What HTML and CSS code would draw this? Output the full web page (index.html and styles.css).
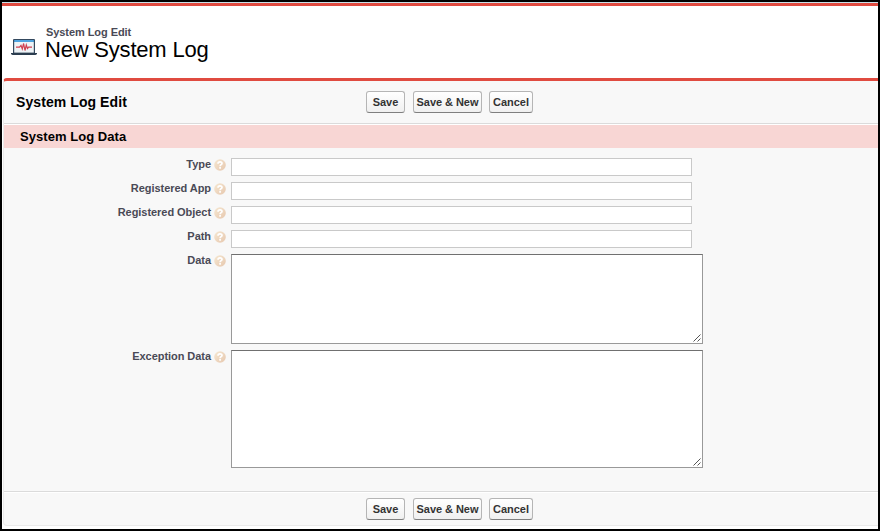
FILE: index.html
```html
<!DOCTYPE html>
<html lang="en">
<head>
<meta charset="utf-8">
<title>New System Log</title>
<link rel="stylesheet" href="styles.css">
</head>
<body>
<svg width="0" height="0" class="defs" aria-hidden="true">
  <defs>
    <linearGradient id="orb" x1="0" y1="0" x2="1" y2="1">
      <stop offset="0" stop-color="#f6e8d2"/>
      <stop offset="1" stop-color="#e6c7ae"/>
    </linearGradient>
    <symbol id="help" viewBox="0 0 12 12">
      <circle cx="6" cy="6" r="5.8" fill="url(#orb)"/>
      <path d="M4 4.7C4 2.2 8 2.3 8 4.4C8 5.7 6.1 5.7 6.1 7.2M6.1 8.1V9.7" fill="none" stroke="#fff" stroke-width="1.7"/>
    </symbol>
  </defs>
</svg>
<div class="window">
  <header class="page-header">
    <svg class="logo" viewBox="0 0 26 18" aria-hidden="true">
      <rect x="2" y="1" width="22" height="15" rx="1" fill="#34495e"/>
      <rect x="3.2" y="2" width="19.6" height="2" fill="#4da3e0"/>
      <rect x="3.2" y="4" width="19.6" height="10.6" fill="#eef3f6"/>
      <path d="M5 9.2H8.5L10 7.5L11.3 11L12.6 5.5L14 12.5L15.3 7L16.5 10.5L17.6 9.2H21" fill="none" stroke="#cf4050" stroke-width="1.2"/>
      <path d="M0 15H26V15.8Q25.5 17 24 17H2Q.5 17 0 15.8Z" fill="#2b3d4f"/>
    </svg>
    <div>
      <div class="kicker">System Log Edit</div>
      <h1>New System Log</h1>
    </div>
  </header>
  <main class="panel">
    <div class="bar top">
      <h2>System Log Edit</h2>
      <div class="buttons"><button class="save">Save</button><button class="save-new">Save &amp; New</button><button class="cancel">Cancel</button></div>
    </div>
    <h3>System Log Data</h3>
    <form class="fields">
      <label for="type">Type</label><svg class="help"><use href="#help"/></svg><input id="type">
      <label for="app">Registered App</label><svg class="help"><use href="#help"/></svg><input id="app">
      <label for="object">Registered Object</label><svg class="help"><use href="#help"/></svg><input id="object">
      <label for="path">Path</label><svg class="help"><use href="#help"/></svg><input id="path">
      <label for="data">Data</label><svg class="help"><use href="#help"/></svg>
      <div class="area data"><textarea id="data"></textarea><svg class="grip" viewBox="0 0 8 8"><path d="M.5 7.5L7.5 .5M4.5 7.5L7.5 4.5"/></svg></div>
      <label for="exception">Exception Data</label><svg class="help"><use href="#help"/></svg>
      <div class="area exception"><textarea id="exception"></textarea><svg class="grip" viewBox="0 0 8 8"><path d="M.5 7.5L7.5 .5M4.5 7.5L7.5 4.5"/></svg></div>
    </form>
    <div class="bar bottom">
      <div class="buttons"><button class="save">Save</button><button class="save-new">Save &amp; New</button><button class="cancel">Cancel</button></div>
    </div>
  </main>
</div>
</body>
</html>
```
FILE: styles.css
```css
* { box-sizing: border-box; }
body { margin: 0; font-family: "Liberation Sans", Arial, sans-serif; }
h1, h2, h3 { margin: 0; }
.defs { position: absolute; }
.window { height: 531px; border: 2px solid #000; background: #fff; padding: 1px 0 0 1px; overflow: hidden; }
.page-header { height: 75px; margin-left: -1px; border-top: 3px solid #e04b40; padding: 20px 0 0 9px; display: flex; box-shadow: 0 -1px #c9e2ea; }
.logo { width: 26px; height: 18px; margin: 12px 8px 0 0; flex: none; }
.kicker { font-size: 11px; font-weight: bold; line-height: 13px; letter-spacing: -.07px; color: #4a4a56; margin-left: 1px; white-space: nowrap; }
h1 { font-size: 22px; font-weight: normal; line-height: 21px; letter-spacing: -.2px; color: #000; white-space: nowrap; }
.panel { height: 448px; border: 1px solid #eaeaea; border-right: 0; border-top: 3px solid #e04b40; border-radius: 4px 0 0 4px; background: #f8f8f8; }
.bar { display: flex; align-items: center; }
.top { height: 43px; border-bottom: 1px solid #dbdbdb; }
.bottom { height: 34px; border-top: 1px solid #dbdbdb; box-shadow: inset 0 1px #fff; padding-left: 362px; }
h2 { width: 350px; margin-left: 12px; font-size: 14px; line-height: 18px; letter-spacing: .08px; }
.buttons { display: flex; }
button { height: 22px; padding: 0; border: 1px solid #b5b5b5; border-bottom-color: #7f7f7f; border-radius: 3px; background: linear-gradient(#fff, #f0f0f0); color: #333; font: bold 11px "Liberation Sans", Arial, sans-serif; letter-spacing: -.05px; white-space: nowrap; }
.save { width: 39px; margin-right: 8px; }
.save-new { width: 69px; margin-right: 7px; }
.cancel { width: 44px; }
h3 { height: 24px; border-top: 1px solid #fff; background: #f8d6d4; padding-left: 16px; font-size: 13px; line-height: 23px; letter-spacing: .05px; }
.fields { height: 343px; margin: 0; padding-top: 10px; display: grid; grid-template-columns: 207px 12px 472px; grid-template-rows: repeat(4, 24px) 96px 118px; column-gap: 4px; align-content: start; align-items: start; }
label { text-align: right; color: #4a4a56; font-size: 11px; font-weight: bold; line-height: 13px; letter-spacing: -.05px; white-space: nowrap; }
.help { width: 12px; height: 12px; margin-top: 1px; margin-left: -1px; }
input { width: 461px; height: 18px; border: 1px solid #c9c9c9; padding: 0 2px; background: #fff; }
.area { position: relative; width: 472px; }
.area.data { height: 90px; }
.area.exception { height: 118px; }
textarea { display: block; width: 100%; height: 100%; resize: none; border: 1px solid #999; border-top-color: #707070; border-radius: 0; background: #fff; }
.grip { position: absolute; right: 2px; bottom: 2px; width: 8px; height: 8px; fill: none; stroke: #555; stroke-width: 1; }
```
